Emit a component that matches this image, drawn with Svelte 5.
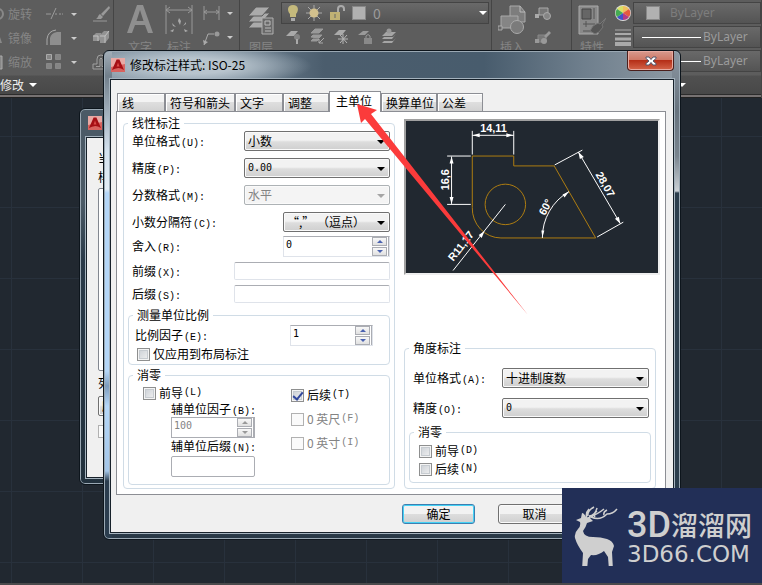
<script>
  const tabs = [
    { name: '线', width: 48 },
    { name: '符号和箭头', width: 70 },
    { name: '文字', width: 48 },
    { name: '调整', width: 46 },
    { name: '主单位', width: 52 },
    { name: '换算单位', width: 56 },
    { name: '公差', width: 46 }
  ];
  let active = $state('主单位');
  let leading = $state(false);
  let trailing = $state(true);
</script>

{#snippet logo()}
  <svg class="logo" viewBox="0 0 14 14" aria-hidden="true">
    <rect width="14" height="14" fill="#e9a9a4" />
    <path d="M0 14V9L14 6v8z" fill="#d8635f" />
    <path d="M1 12 5.6 1.5h2.8L13 12l-3-1.500-2.800-.5-3.200.8z" fill="#a50f14" />
    <path d="M5.600 8.500 7 4.500l1.500 4z" fill="#dc4a46" />
  </svg>
{/snippet}

{#snippet combo(id, value, disabled = false)}
  <span class="combo" class:off={disabled}>
    <select {id} {disabled}><option>{value}</option></select>
  </span>
{/snippet}

{#snippet spinner(id, value, disabled = false)}
  <span class="spinner" class:off={disabled}>
    <input {id} type="text" {value} {disabled} />
    <span class="steps">
      <button type="button" aria-label="增加" {disabled}><i class="up"></i></button>
      <button type="button" aria-label="减少" {disabled}><i class="down"></i></button>
    </span>
  </span>
{/snippet}

<main class="desktop">
  <header class="ribbon">
    <section class="panel modify">
      <div class="tool-row">
        <svg width="8" height="18" viewBox="0 0 8 18"><path d="M-2 4a5 5 0 0 1 0 10" fill="none" stroke="#888" stroke-width="2" /></svg>
        <span class="tool-name">旋转</span>
        <svg class="tool" viewBox="0 0 18 18"><path d="M1 9h5M6 14l5-11M10 9h2m2 0h2m1 0h1" stroke="#9b9b9b" fill="none" /></svg>
        <i class="tri"></i>
        <svg class="tool" viewBox="0 0 18 18"><path d="m17 1-8 8 2 2 7-8zM8 9l3 3-2 2H4c2-1 2-4 4-5z" fill="#999" /><path d="M1 16h14" stroke="#999" /></svg>
      </div>
      <div class="tool-row">
        <svg width="8" height="18" viewBox="0 0 8 18"><path d="M0 8l2 6H0z" fill="#888" /></svg>
        <span class="tool-name">镜像</span>
        <svg class="tool" viewBox="0 0 18 18"><path d="M5 16V9q1-5 7-6h4v13z" fill="#8e8e8e" /><path d="M2 16V10Q3 2 11 1" stroke="#aaa" fill="none" /></svg>
        <i class="tri"></i>
        <svg class="tool" viewBox="0 0 18 18"><path d="M1 7l3-3h5v5l-2 3H1zM8 6l4-4h5v7l-4 5H8z" fill="#929292" /><path d="M1 7h5v5M8 7h5v7M13 7l4-5" stroke="#c0c0c0" fill="none" /></svg>
      </div>
      <div class="tool-row">
        <svg width="8" height="18" viewBox="0 0 8 18"><path d="M0 3h2v13H0" fill="#888" stroke="#aaa" /></svg>
        <span class="tool-name">缩放</span>
        <svg class="tool" viewBox="0 0 18 18"><g fill="#858585" stroke="#aaa"><path d="M1.500 1.500h5v5h-5z" /><path stroke="#888" d="M10.500 1.500h5v5h-5zM1.500 10.500h5v5h-5zM10.500 10.500h5v5h-5z" /></g></svg>
        <i class="tri"></i>
        <svg class="tool" viewBox="0 0 18 18"><path d="M1 16v-5h4V6q0-4 4-4t4 4v5h4v5zM4 13.500h4V6q1-2 2 0v7.500h4" fill="none" stroke="#a0a0a0" /></svg>
      </div>
      <h2 class="panel-title">修改 <i class="tri white"></i></h2>
    </section>

    <section class="panel annotate">
      <div class="big">
        <svg width="26" height="30" viewBox="0 0 26 30"><path d="M0 28 10 0h6l10 28h-5l-3-8H8l-3 8zM9.500 16h7L13 5z" fill="#8f8f8f" /></svg>
        <span>文字</span>
      </div>
      <div class="big">
        <svg width="28" height="30" viewBox="0 0 28 30"><path d="M1 0v29M27 0v29M1 5h26M5 2 1 5l4 3M23 2l4 3-4 3" fill="none" stroke="#999" /><path d="m13 16 1-3 2 3-1 4zM7 18l4 4-3-1zM21 17l-3 4 3-2zM5 26l4-2-1 3zM23 26l-4-2 1 3z" fill="#aaa" /></svg>
        <span>标注</span>
      </div>
      <div class="stack">
        <svg viewBox="0 0 18 18"><path d="M1 2v14M16 2v14M1 8h15M4 6 1 8l3 2M13 6l3 2-3 2" fill="none" stroke="#999" /></svg>
        <svg viewBox="0 0 18 18"><path d="M1 17 5 6h6" fill="none" stroke="#aaa" /><circle cx="14" cy="6" r="2.500" fill="#999" /><path d="m0 12 1 5 4-3z" fill="#aaa" /></svg>
      </div>
      <div class="stack carets"><i class="tri"></i><i class="tri"></i></div>
    </section>

    <section class="panel layers">
      <div class="big">
        <svg width="28" height="30" viewBox="0 0 28 30"><g fill="#aaa" stroke="#5a5a5a"><path d="m1 23 8-9h14l-8 9z" /><path d="m1 17 8-9h14l-8 9z" /><path d="m1 11 8-9h14l-8 9z" /></g><path d="M15 13h11v16H15z" fill="#6a6a6a" stroke="#b0b0b0" /><path d="M18 16h5v4h-5zM18 23h6M18 26h6" fill="none" stroke="#bbb" /></svg>
        <span>图层</span>
      </div>
      <div class="layer-tools">
        <button class="ribbon-combo layer-pick" type="button" aria-label="图层 0">
          <svg width="12" height="18" viewBox="0 0 12 18"><path d="M6 1c6 0 6 6 3 9v3H3v-3C0 7 0 1 6 1z" fill="#c4b97c" /><path d="M4 14h4v3H4z" fill="#aaa" /></svg>
          <svg width="16" height="16" viewBox="0 0 16 16"><path d="M8 0v16M0 8h16M2 2l12 12M14 2 2 14" stroke="#aaa" /><circle cx="8" cy="8" r="4.500" fill="#d2c08d" /></svg>
          <svg width="16" height="16" viewBox="0 0 16 16"><path d="M9 7V4q0-3 3-3t3 3v2" fill="none" stroke="#aaa" stroke-width="2" /><path d="M1 7h10v8H1z" fill="#c0b174" /><path d="M6 9v4" stroke="#666" /></svg>
          <i class="swatch"></i><span>0</span><i class="tri wide"></i>
        </button>
        <div class="layer-icons">
          <svg class="tool" viewBox="0 0 18 18"><path d="m2 9 5-5h7l-4 5z" fill="#aaa" /><circle cx="13" cy="10" r="3" fill="#858585" /><path d="M13 12v5" stroke="#aaa" stroke-width="2" /></svg>
          <svg class="tool" viewBox="0 0 18 18"><path d="m3 6 4-4h8l-4 4zM3 10l2-2h9l-3 3zM3 14l2-2h6l-2 2z" fill="#999" stroke="#999" /><path d="m16 11-5 5M11 12v4h4" fill="none" stroke="#aaa" /></svg>
          <svg class="tool" viewBox="0 0 18 18"><path d="m2 8 5-5h7l-4 5z" fill="#aaa" /><path d="M11 7v10M6 12h10M8 8l7 8M15 8l-7 8" stroke="#b5b5b5" /></svg>
          <svg class="tool" viewBox="0 0 18 18"><path d="m2 8 5-4h6l-4 4z" fill="#999" /><path d="M10 11V9q2-3 4 0v2" fill="none" stroke="#999" /><path d="M8 11h8v6H8z" fill="#898989" /></svg>
          <svg class="tool" viewBox="0 0 18 18"><path d="m3 8 3-3h10l-4 4H2zM2 12l2-2h9l3-3-4 5zM2 16l2-2h9l3-3-4 5z" fill="#a5a5a5" /><circle cx="9" cy="4" r="2.500" fill="#999" /></svg>
        </div>
      </div>
    </section>

    <section class="panel insert">
      <div class="big">
        <svg width="28" height="30" viewBox="0 0 28 30"><path d="M12 1h10l5 6v10H12z" fill="#7d7d7d" stroke="#aaa" /><path d="M22 1v6h5" fill="none" stroke="#bbb" /><path d="M3 11h17v12H3z" fill="#858585" stroke="#aaa" /><circle cx="19" cy="22" r="6.500" fill="#7b7b7b" stroke="#aaa" /><path d="M0 21h4v4H0z" fill="#666" stroke="#aaa" /></svg>
        <span>插入</span>
      </div>
      <div class="stack">
        <svg viewBox="0 0 18 18"><path d="M5 4h9v7H5z" fill="#777" stroke="#aaa" /><circle cx="13" cy="12" r="3.500" fill="#858585" stroke="#aaa" /><path d="M1 10h4v4H1z" fill="#aaa" /></svg>
        <svg viewBox="0 0 18 18"><path d="M4 7h8v7H4z" fill="#777" stroke="#888" /><circle cx="10" cy="13" r="3" fill="#999" /><path d="M1 11h4v4H1zM10 8l5-5 2 2-5 5z" fill="#999" /></svg>
      </div>
    </section>

    <section class="panel properties">
      <div class="big">
        <svg width="28" height="30" viewBox="0 0 28 30"><path d="M1 1h19v28H1z" fill="#898989" stroke="#aaa" /><path d="M4 4h9v10H4z" fill="#666" stroke="#444" /><path d="M16 3v11M5 19h12M8 16v6M5 26h8" stroke="#555" /><path d="m12 26 3-5 5-3 2 1 6-6-4 7 1 2-4 5-4 2z" fill="#565656" stroke="#777" /></svg>
        <span>特性</span>
      </div>
      <div class="stack">
        <svg viewBox="0 0 18 18"><circle cx="9" cy="9" r="8" fill="#ddd" /><g transform="translate(9 9)"><path d="M0 0-6-4A7 7 0 0 1 0-7z" fill="#d8e067" /><path d="M0 0V-7A7 7 0 0 1 6-4z" fill="#f0c05c" /><path d="M0 0 6-4A7 7 0 0 1 6 4z" fill="#e65a3e" /><path d="M0 0 6 4A7 7 0 0 1 0 7z" fill="#b33a83" /><path d="M0 0V7A7 7 0 0 1-6 4z" fill="#4054c8" /><path d="M0 0-6 4A7 7 0 0 1-6-4z" fill="#45ac52" /></g></svg>
        <svg viewBox="0 0 18 18"><path d="M1 2h16" stroke="#aaa" /><path d="M1 6h16" stroke="#aaa" stroke-width="2" /><path d="M1 11h16" stroke="#aaa" stroke-width="3" /><path d="M1 16h16" stroke="#aaa" stroke-width="4" /></svg>
      </div>
      <div class="bylayer">
        <button class="ribbon-combo dim" type="button"><i class="swatch"></i><span>ByLayer</span></button>
        <button class="ribbon-combo" type="button"><i class="line"></i><span>ByLayer</span></button>
        <button class="ribbon-combo" type="button"><i class="line"></i><span>ByLayer</span></button>
      </div>
      <h2 class="panel-title end"><i class="tri white"></i></h2>
    </section>
  </header>

  <section class="window manager" aria-label="标注样式管理器">
    <div class="titlebar">{@render logo()}</div>
    <div class="client">
      <p>当前标注样式</p>
      <label for="styles">样式(S):</label>
      <select id="styles" class="style-list" size="8"><option>ISO-25</option></select>
      <label for="list-kind">列出(L):</label>
      {@render combo('list-kind', '所有样式')}
      <input class="tick" type="checkbox" disabled aria-label="不列出外部参照中的样式" />
    </div>
  </section>

  <section class="window modify-style" role="dialog" aria-labelledby="dialog-title">
    <div class="titlebar">
      {@render logo()}
      <h1 id="dialog-title">修改标注样式: ISO-25</h1>
      <button class="close" type="button" aria-label="关闭">
        <svg width="12" height="10" viewBox="0 0 12 10"><path d="M1 1h3l2 2.500L8 1h3v1.500L8 5l3 2.500V9H8L6 6.500 4 9H1V7.500L4 5 1 2.500z" fill="#fff" stroke="#53566b" /></svg>
      </button>
    </div>
    <div class="client">
      <div class="tabs" role="tablist">
        {#each tabs as tab}
          <button type="button" role="tab" aria-selected={active === tab.name} class:active={active === tab.name} style:width="{tab.width}px" onclick={() => (active = tab.name)}>{tab.name}</button>
        {/each}
      </div>

      <form class="page">
        <fieldset class="linear">
          <legend>线性标注</legend>
          <div class="rows loose">
            <div class="row"><label for="unit">单位格式<b>(U):</b></label><div class="w146">{@render combo('unit', '小数')}</div></div>
            <div class="row"><label for="prec">精度<b>(P):</b></label><div class="w146">{@render combo('prec', '0.00')}</div></div>
            <div class="row"><label for="frac">分数格式<b>(M):</b></label><div class="w146">{@render combo('frac', '水平', true)}</div></div>
            <div class="row"><label for="sep">小数分隔符<b>(C):</b></label><div class="w107">{@render combo('sep', '“,” （逗点）')}</div></div>
          </div>
          <div class="rows">
            <div class="row"><label for="round">舍入<b>(R):</b></label><div class="w107">{@render spinner('round', '0')}</div></div>
            <div class="row"><label for="prefix">前缀<b>(X):</b></label><input class="text w156" id="prefix" type="text" /></div>
            <div class="row"><label for="suffix">后缀<b>(S):</b></label><input class="text w156" id="suffix" type="text" /></div>
          </div>

          <fieldset class="scale">
            <legend>测量单位比例</legend>
            <div class="row"><label for="factor">比例因子<b>(E):</b></label><div class="w83">{@render spinner('factor', '1')}</div></div>
            <label class="check"><input class="tick" type="checkbox" />仅应用到布局标注</label>
          </fieldset>

          <fieldset class="zeros">
            <legend>消零</legend>
            <div class="zero-left">
              <label class="check"><input class="tick" type="checkbox" bind:checked={leading} />前导<b>(L)</b></label>
              <div class="sub">
                <label for="subf">辅单位因子<b>(B):</b></label>
                {@render spinner('subf', '100', true)}
                <label for="subs">辅单位后缀<b>(N):</b></label>
                <input class="text tall" id="subs" type="text" />
              </div>
            </div>
            <div class="zero-right">
              <label class="check"><input class="tick" type="checkbox" bind:checked={trailing} />后续<b>(T)</b></label>
              <label class="check gray"><input class="tick" type="checkbox" disabled />0 英尺<b>(F)</b></label>
              <label class="check gray"><input class="tick" type="checkbox" disabled />0 英寸<b>(I)</b></label>
            </div>
          </fieldset>
        </fieldset>

        <div class="right">
          <div class="preview">
            <svg viewBox="0 0 254 154" role="img" aria-label="标注预览">
              <g transform="translate(-2 -2)">
                <g fill="none" stroke="#b07e10">
                  <path d="M68.500 89.500V37.500h42v10h41l42 73h-96a29 30 0 0 1-29-31" />
                  <circle cx="102" cy="86.500" r="20.500" />
                </g>
                <g fill="none" stroke="#fff">
                  <path d="M68.500 12v24M110.500 12v24M68.500 16.500h42M43 37.500h24M43 86.500h24M47.500 38v48" />
                  <path d="M152 46.500l28-15M195 119.500l26.500-15M176 33.500 218.500 106M102 86.500 49 153.500" />
                  <path d="M139.500 120.500a54 54 0 0 1 27-47" />
                </g>
                <path fill="#fff" d="m69 16.500 7-2v4zM110 16.500l-7-2v4zM47.500 38l-2 7h4zM47.500 86l-2-7h4zM176 33.500l1.500 7 4-2zM218.500 106l-5.500-5 4-2zM81 113.500l-6 4 3 3zM139.500 120l-1-7h3zM166.500 73.500l-6.500 3 2 3z" />
                <g class="dim-text">
                  <text x="90" y="13">14,11</text>
                  <text transform="translate(45 61.500) rotate(-90)">16,6</text>
                  <text transform="translate(200 68) rotate(60)">28,07</text>
                  <text transform="translate(146 91) rotate(-62)">60°</text>
                  <text transform="translate(60 131) rotate(-52)">R11,17</text>
                </g>
              </g>
            </svg>
          </div>

          <fieldset class="angular">
            <legend>角度标注</legend>
            <div class="row"><label for="aunit">单位格式<b>(A):</b></label><div class="w147">{@render combo('aunit', '十进制度数')}</div></div>
            <div class="row"><label for="aprec">精度<b>(O):</b></label><div class="w147">{@render combo('aprec', '0')}</div></div>
            <fieldset class="angle-zeros">
              <legend>消零</legend>
              <label class="check"><input class="tick" type="checkbox" />前导<b>(D)</b></label>
              <label class="check"><input class="tick" type="checkbox" />后续<b>(N)</b></label>
            </fieldset>
          </fieldset>
        </div>
      </form>

      <div class="actions">
        <button class="push default" type="button">确定</button>
        <button class="push" type="button">取消</button>
      </div>
    </div>
  </section>

  <svg class="pointer" width="172" height="212" viewBox="0 0 172 212" aria-hidden="true">
    <path d="M0 0 20 6 14 10 171 211 8 15 4 19z" fill="#fb3b3b" />
  </svg>

  <aside class="brand">
    <svg width="46" height="60" viewBox="0 0 46 60" aria-hidden="true">
      <path d="M2 14 7 12 8 7q2 0 4 4l4 1 3 3-6 2q-1 4-4 8 1 6 10 6 8 0 14 2 6 2 7 7l-2 6 1 18h-4l-1-13-4-6q-6 5-13 4l-3 4-1 11h-5l1-17q-6-8-8-15-1-5 3-9 3-3 2-7z" fill="#cfcfcf" />
      <path d="M13 13Q11 7 15 3M14 10q-1-5 6-9M15 10q6 0 8-8M14 12q10-4 16-9M17 11q9 4 16-3 6 0 10-5M21 11q-2-3 2-6M30 9q-1-3 3-5" fill="none" stroke="#cfcfcf" stroke-width="1.500" />
    </svg>
    <div class="brand-text">
      <strong><span>3D</span>溜溜网</strong>
      <em>3D66.COM</em>
    </div>
  </aside>
</main>

<style>
  :global(body) { margin: 0; }
  * { box-sizing: border-box; }
  .desktop {
    position: relative; min-height: 100vh; overflow: hidden;
    font: 12px/16px "Noto Sans CJK SC", sans-serif; color: #000;
    background:
      repeating-linear-gradient(90deg, transparent 0 11px, #28313c 11px 12px, transparent 12px 71px),
      repeating-linear-gradient(0deg, transparent 0 20px, #28313c 20px 21px, transparent 21px 71px),
      #212830;
    border-bottom: 2px solid #4a4a4c;
  }
  button, input, select { font: inherit; color: inherit; margin: 0; }
  h1, h2, p { margin: 0; font-size: inherit; font-weight: 400; }
  svg { display: block; flex: none; }

  .ribbon {
    display: flex; height: 98px; color: #858585;
    background: linear-gradient(#5d5d5d 0 75px, #505050 76px, #484848 94px, #2c2c2c 94px 95px, #777272 95px 97px, #222 97px);
  }
  .panel { position: relative; display: flex; padding: 2px 0 22px; border-right: 1px solid #454545; flex: none; }
  .modify { flex-direction: column; width: 114px; }
  .tool-row { display: flex; align-items: center; height: 24px; flex: none; }
  .tool { width: 18px; height: 18px; }
  .tool-name { width: 37px; }
  .tool-row .tri { margin: 0 15px 0 8px; }
  .tri { display: inline-block; border: 3px solid transparent; border-top: 3px solid #ccc; border-bottom: 0; flex: none; }
  .tri.white, .tri.wide { border-width: 4px 4px 0; border-top-color: #fff; }
  .panel-title { position: absolute; left: 0; bottom: 5px; display: flex; align-items: center; gap: 5px; height: 16px; color: #eee; }
  .panel-title.end { left: 106px; }
  .big { display: flex; flex-direction: column; align-items: center; gap: 4px; padding-top: 3px; flex: none; }
  .stack { display: flex; flex-direction: column; gap: 6px; padding-top: 2px; }
  .stack svg { width: 18px; height: 18px; }
  .annotate { width: 126px; padding-left: 13px; gap: 12px; }
  .annotate .stack { margin-left: -2px; }
  .annotate .carets { padding-top: 10px; gap: 21px; margin-left: -6px; }
  .layers { width: 252px; padding-left: 7px; }
  .layer-tools { margin-left: 6px; flex: 1; }
  .ribbon-combo { display: flex; align-items: center; width: 100%; height: 22px; padding: 0; border: 1px solid #444; background: linear-gradient(#696969, #545454); color: #9b9b9b; white-space: nowrap; overflow: hidden; }
  .layer-pick { width: 208px; gap: 7px; padding: 0 5px; font-size: 14px; }
  .layer-pick .wide { margin-left: auto; margin-right: -4px; }
  .swatch { width: 14px; height: 14px; background: #b1b1b1; border: 1px solid #888; flex: none; }
  .layer-icons { display: flex; gap: 6px; padding: 3px; }
  .insert { width: 80px; padding-left: 6px; gap: 8px; }
  .properties { flex: 1; padding-left: 6px; gap: 8px; }
  .bylayer { display: flex; flex-direction: column; gap: 2px; flex: 1; margin-left: -7px; }
  .bylayer .ribbon-combo { padding-left: 8px; gap: 2px; font-family: "Noto Sans", sans-serif; }
  .bylayer .dim { padding-left: 12px; gap: 10px; color: #7d7d7d; }
  .line { width: 59px; height: 1px; background: #fff; flex: none; }

  .window { position: absolute; display: flex; flex-direction: column; border: 1px solid #0d151c; border-radius: 6px; box-shadow: inset 0 0 0 1px #9aa8b3; padding: 0 6px 6px; }
  .titlebar { display: flex; align-items: center; height: 28px; flex: none; }
  .logo { width: 14px; height: 14px; }
  .client { flex: 1; background: #f0f0f0; border: 1px solid #17212a; box-shadow: 0 0 0 1px #a5b3be; }
  .manager { left: 79px; top: 108px; width: 430px; height: 377px; background: linear-gradient(#4b5a66 0 25%, #2a3a49 40%, #22313d); }
  .manager .titlebar { padding-left: 2px; }
  .manager .client { display: flex; flex-direction: column; align-items: flex-start; padding: 12px 11px; gap: 3px; }
  .manager .client .combo { width: 120px; margin: 2px 0 6px; }
  .style-list { width: 140px; height: 183px; padding-left: 8px; border: 1px solid #828790; background: #fff; margin-bottom: 1px; }

  .modify-style {
    left: 103px; top: 50px; width: 578px; height: 490px;
    background:
      linear-gradient(#a4afb9 0, #717f8b 25px, #d4e2ef 100px, #e3edf6 138px, #b5d7f8 142px, #b5d7f8 320px, #7d9cbd 335px, #b5d7f8 355px, #a4c6e8 420px, #2b3d4e 430px) left / 8px 100% no-repeat,
      linear-gradient(#8d98a3 0, #67737e 60px, #79848e 105px, #cad0d5 140px, #2b3d4c 142px) right / 8px 100% no-repeat,
      radial-gradient(ellipse 120px 22px at 88px 15px, #b8c4cd 0 35%, transparent) no-repeat,
      linear-gradient(90deg, #7f909e 0, #8195a5 100px, #4b5d6d 220px, #485c6d 380px, #6f7f8d 480px, #8e9aa4) top / 100% 40px no-repeat,
      #293947;
  }
  .modify-style .titlebar { padding-left: 1px; gap: 5px; }
  h1 { font-size: 12px; white-space: nowrap; }
  .close { align-self: flex-start; display: grid; place-items: center; width: 47px; height: 20px; margin-left: auto; padding: 0; border: 1px solid #4b1f1c; border-top: 0; border-radius: 0 0 4px 4px; box-shadow: inset 0 0 0 1px #e8aba1; background: linear-gradient(#d79a8e, #cf7a68 45%, #b52f18 50%, #d4654a); }
  .modify-style .client { padding: 11px 7px 8px 5px; }

  .tabs { display: flex; align-items: flex-end; height: 20px; padding-left: 1px; }
  .tabs button { height: 18px; padding: 0 0 0 4px; border: 1px solid #8c8e94; border-bottom: 0; background: linear-gradient(#f3f3f3 0 45%, #dedede 50%, #d2d2d2); box-shadow: inset 1px 1px #fff; text-align: left; line-height: 16px; white-space: nowrap; }
  .tabs .active { height: 21px; margin-bottom: -1px; padding: 0 0 2px 6px; background: #fff; z-index: 1; }

  .page { display: flex; gap: 9px; height: 384px; padding: 3px 5px 5px 6px; background: #fff; border: 1px solid #8c8e94; }
  fieldset { margin: 0; min-width: 0; padding: 0 4px; border: 1px solid #d0dce6; border-radius: 4px; }
  legend { padding: 0 4px; height: 16px; line-height: 16px; }
  .linear { width: 272px; flex: none; }
  b { margin-left: 1px; font: 10px/12px "Liberation Mono", monospace; }
  .rows { display: flex; flex-direction: column; gap: 5px; padding-bottom: 4px; }
  .rows.loose { gap: 7px; }
  .row { display: flex; align-items: center; justify-content: space-between; }
  .rows .row { padding-left: 4px; }
  .w146 { width: 146px; } .w147 { width: 147px; } .w107 { width: 107px; } .w83 { width: 83px; } .w156 { width: 156px; }

  .combo { position: relative; display: block; height: 20px; }
  .combo select { appearance: none; display: block; width: 100%; height: 20px; padding: 0 16px 0 3px; border: 1px solid #707070; border-radius: 2px; box-shadow: inset 0 0 0 1px #fafafa; background: linear-gradient(#f2f2f2 0 45%, #dddddd 55%, #cfcfcf); color: #000; line-height: 16px; opacity: 1; }
  .combo::after { content: ""; position: absolute; right: 5px; top: 9px; border: 4px solid transparent; border-top-color: #000; border-bottom: 0; pointer-events: none; }
  .combo.off select { background: #f4f4f4; border-color: #adb2b5; color: #838383; }
  .combo.off::after { border-top-color: #a5a5a5; }
  #prec, #aprec, .spinner input { font-family: "DejaVu Sans Mono", monospace; font-size: 10px; }
  .text { height: 18px; border: 1px solid #dfe3ea; border-top-color: #abadb3; border-radius: 2px; background: #fff; padding: 0 3px; }
  .text.tall { width: 84px; height: 21px; border-color: #abadb3; }
  .spinner { display: flex; height: 21px; border: 1px solid #dfe3ea; border-top-color: #abadb3; background: #fff; }
  .spinner.off { border-color: #abadb3; color: #838383; }
  .spinner input { flex: 1; min-width: 0; padding: 0 2px 3px; border: 0; background: transparent; }
  .steps { display: flex; flex-direction: column; width: 17px; gap: 1px; border-right: 1px solid #abadb3; }
  .steps button { display: grid; place-items: center; flex: 1; width: 15px; padding: 0; border: 1px solid #abadb3; background: linear-gradient(#f8f8f8, #e0e0e0); }
  .up, .down { border: 3px solid transparent; border-top: 0; border-bottom-color: #4a62b0; }
  .down { border-bottom: 0; border-top: 3px solid #4a62b0; }
  .off .up { border-bottom-color: #999; } .off .down { border-top-color: #999; }

  .check { display: flex; align-items: center; gap: 3px; height: 16px; white-space: nowrap; }
  .check b { margin-left: -2px; }
  .gray { color: #838383; }
  .tick { appearance: none; display: grid; place-items: center; width: 13px; height: 13px; border: 1px solid #8e8f8f; background: linear-gradient(135deg, #c8cdd3, #f3f3f3); box-shadow: inset 0 0 0 1px #f4f4f4, inset 0 0 0 2px #c6cbd0; flex: none; }
  .tick:disabled { border-color: #b1b1b1; background: #fafafa; box-shadow: none; }
  .tick:checked::after { content: ""; width: 4px; height: 8px; border: solid #31479c; border-width: 0 2px 2px 0; transform: rotate(40deg); margin-bottom: 2px; }

  .scale { height: 58px; padding: 0 8px; }
  .scale > legend, .zeros > legend { margin-left: -4px; }
  .scale .row { padding: 2px 8px 0 0; margin-left: -2px; }
  .zeros { display: grid; grid-template-columns: 148px 1fr; height: 118px; margin-top: 2px; padding: 0 0 0 8px; }
  .zero-left { padding: 2px 0 0 6px; }
  .sub { padding-left: 28px; width: 112px; white-space: nowrap; }
  .sub label { display: block; height: 16px; }
  .sub label + .text { display: block; margin-top: 2px; }
  .zero-right { display: flex; flex-direction: column; gap: 8px; padding: 4px 0 0 6px; }

  .right { display: flex; flex-direction: column; justify-content: space-between; flex: 1; padding-top: 4px; }
  .preview { border: 2px solid #a0a0a0; border-color: #a0a0a0 #eee #eee #a0a0a0; background: #212830; height: 156px; }
  .preview svg { width: 100%; height: 100%; }
  .dim-text { font: bold 11px "Liberation Sans", sans-serif; fill: #fff; text-anchor: middle; }
  .angular { height: 149px; margin-right: 4px; padding: 0 4px; }
  .angular > .row { padding: 0 2px 0 4px; margin: 12px 0 10px; }
  .angular > .row + .row { margin: 0 0 6px; }
  .angle-zeros { height: 59px; padding: 3px 9px; }
  .angle-zeros legend { margin-left: -5px; }
  .angle-zeros .check + .check { margin-top: 2px; }

  .actions { display: flex; gap: 23px; padding: 9px 0 0 286px; }
  .push { width: 73px; height: 20px; padding: 0; border: 1px solid #707070; border-radius: 3px; background: linear-gradient(#f2f2f2 0 48%, #dddddd 52%, #cfcfcf); box-shadow: inset 0 0 0 1px #fafafa; line-height: 16px; }
  .default { border-color: #3c7fb1; box-shadow: inset 0 0 0 1px #45d2f5; }

  .pointer { position: absolute; left: 357px; top: 104px; z-index: 2; pointer-events: none; }
  .brand { position: absolute; right: 0; bottom: -2px; z-index: 2; display: flex; gap: 7px; width: 200px; height: 97px; padding: 18px 0 0 12px; background: #222f57; color: #cfcfcf; }
  .brand-text { display: flex; flex-direction: column; white-space: nowrap; }
  .brand strong { display: flex; align-items: center; height: 38px; font-size: 27px; font-weight: 500; }
  .brand strong span { font: 500 36px/38px "Roboto", sans-serif; }
  .brand em { font: 23px/20px "DejaVu Sans", sans-serif; }
</style>
